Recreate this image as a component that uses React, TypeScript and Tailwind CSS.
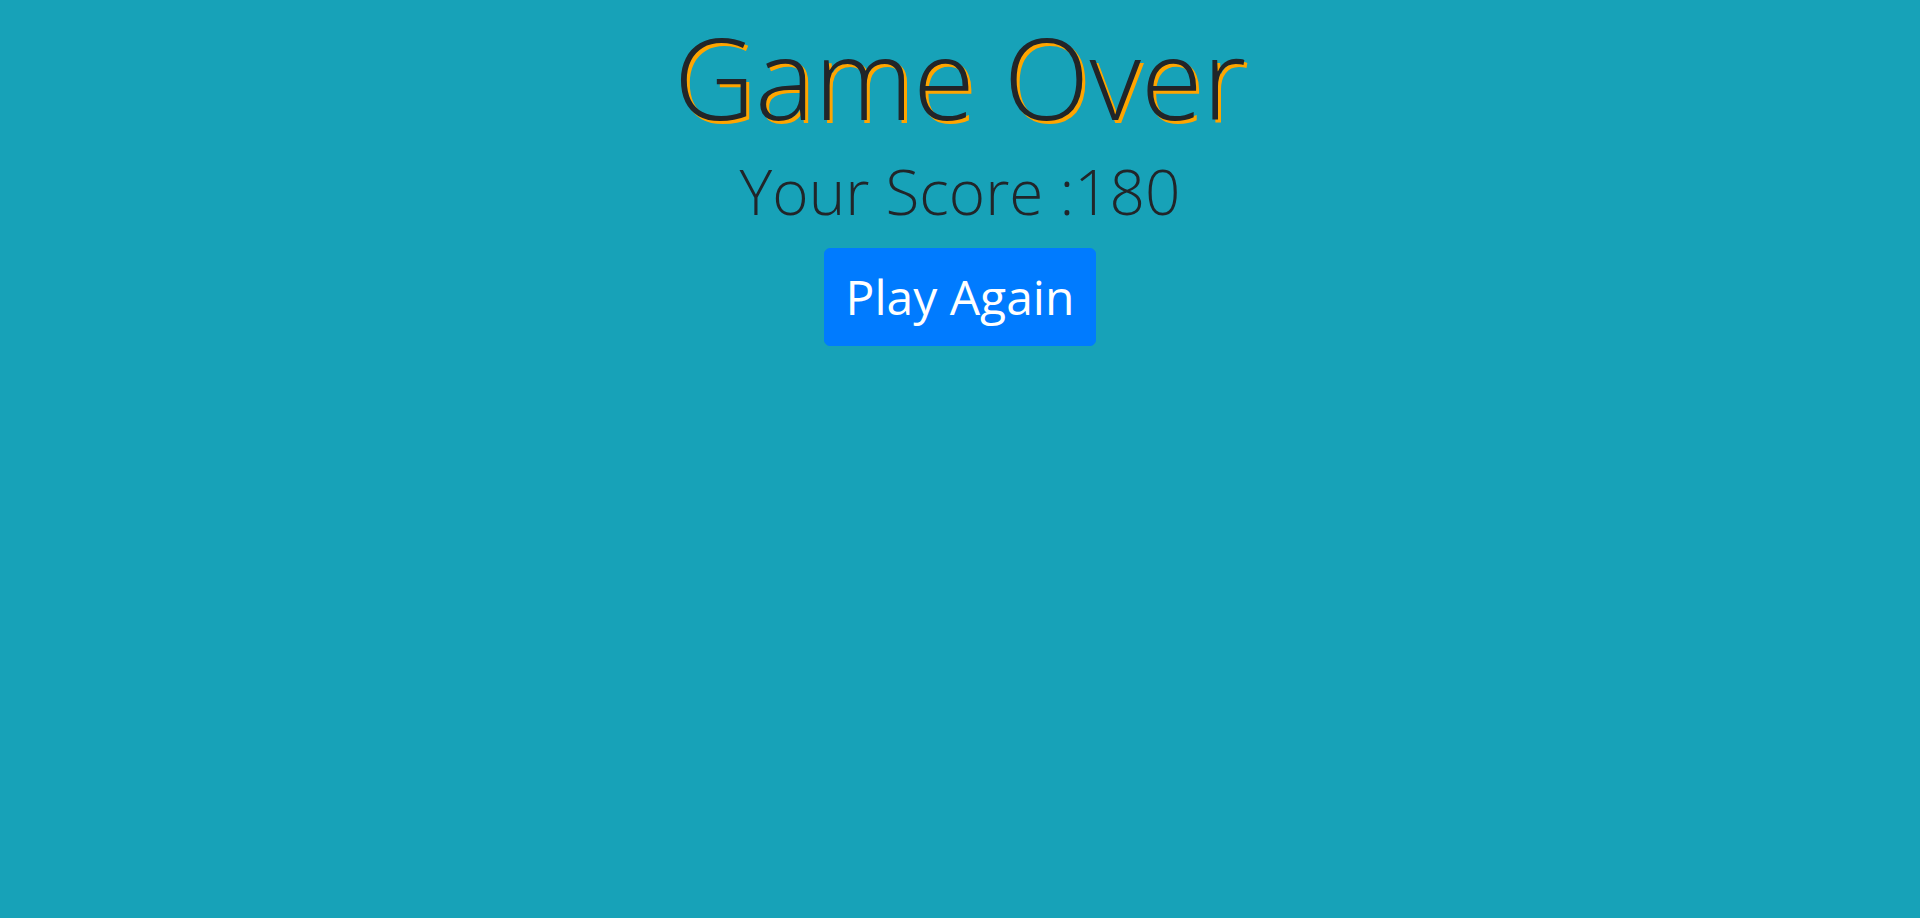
import React from 'react';

export default function App() {
  const score = 180;
  return (
    <div className="min-h-[918px] w-full bg-[#17a2b8] font-['Open_Sans',sans-serif] text-[#212529]">
      <div className="flex flex-col items-center pt-[10px]">
        <h1 className="text-[112px] font-light leading-[134px] [text-shadow:3px_3px_0_#ffa500]">Game Over</h1>
        <h2 className="mt-[7px] text-[62px] font-light leading-[80px]">Your Score :{score}</h2>
        <button className="mt-[17px] rounded-[6px] border border-[#007bff] bg-[#007bff] px-[21px] py-3 text-[48px] leading-[72px] text-white">
          Play Again
        </button>
      </div>
    </div>
  );
}
